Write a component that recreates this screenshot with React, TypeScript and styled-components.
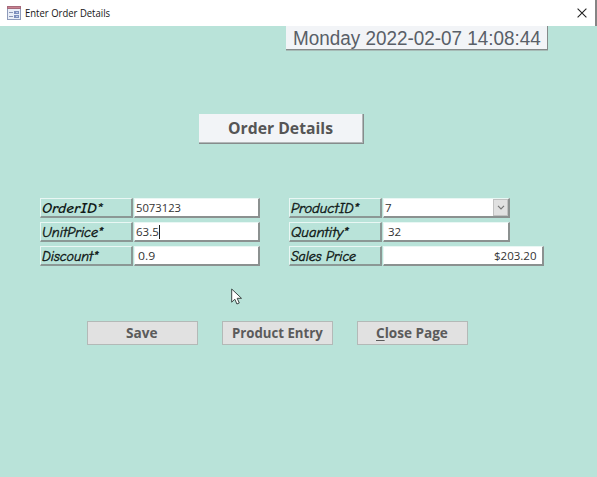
import React, { useLayoutEffect, useRef } from "react";
import styled, { createGlobalStyle } from "styled-components";

const Global = createGlobalStyle`
  * { box-sizing: border-box; }
  body { margin: 0; background: #b9e3d9; overflow: hidden; }
`;

const Window = styled.div`
  width: 597px;
  height: 477px;
  background: #b9e3d9;
  display: flex;
  flex-direction: column;
  font-family: "Open Sans", "Noto Sans", sans-serif;
  color: #444;
`;

const TitleBar = styled.header`
  height: 26px;
  flex: none;
  display: flex;
  align-items: center;
  background: #fff;
  border-right: 2px solid #858585;
  padding: 0 8px 0 7px;
`;

const Title = styled.div`
  flex: 1;
  margin-left: 4px;
  font-size: 11.5px;
  line-height: 16px;
  color: #151515;
`;

const FitText = styled.span<{ $width: number }>`
  display: block;
  width: ${(p) => p.$width}px;
  white-space: nowrap;
  & > span { display: inline-block; transform-origin: 0 50%; }
`;

/* Condenses or widens its text to span the given width. */
function Fit({ width, children }: { width: number; children: React.ReactNode }) {
  const ref = useRef<HTMLSpanElement>(null);
  useLayoutEffect(() => {
    const fit = () => {
      const el = ref.current;
      if (el && el.offsetWidth) el.style.transform = `scaleX(${width / el.offsetWidth})`;
    };
    fit();
    document.fonts.ready.then(fit);
  }, [width]);
  return (
    <FitText $width={width}>
      <span ref={ref}>{children}</span>
    </FitText>
  );
}

const Clock = styled.div`
  flex: none;
  width: 262px;
  height: 24px;
  margin-left: 286px;
  padding-left: 7px;
  background: #f2f4f7;
  border: solid #858a8a;
  border-width: 0 1.5px 1.5px 0;
  box-shadow: 0 1px 0 #a6bcb7;
  font: 19.5px/24px "Liberation Sans", Arial, sans-serif;
  color: #595f68;
`;

const Heading = styled.h1`
  flex: none;
  width: 165px;
  height: 30px;
  margin: 64px 0 0 199px;
  padding-left: 29px;
  background: #f2f4f7;
  border: solid #868c8c;
  border-width: 0 1px 1px 0;
  box-shadow: inset -1px -1px 0 #b3b8b9;
  font-size: 16.5px;
  line-height: 28px;
  font-weight: 700;
  color: #555;
`;

const Form = styled.main`
  flex: none;
  display: flex;
  gap: 29px;
  margin: 54px 0 0 40px;
`;

const Column = styled.div`
  display: flex;
  flex-direction: column;
  gap: 4px;
`;

const Row = styled.div`
  display: flex;
  gap: 1px;
  height: 20px;
`;

const Label = styled.label<{ $bold?: boolean }>`
  width: 93px;
  padding-left: 1px;
  border: solid;
  border-width: 1px 2px 2px 1px;
  border-color: #e9f7f4 #8b9895 #8b9895 #e9f7f4;
  font: italic ${(p) => (p.$bold ? 700 : 400)} 13px/20px "Comic Sans MS", "Comic Neue", "Open Sans", cursive;
  -webkit-text-stroke: ${(p) => (p.$bold ? 0 : 0.4)}px #111a18;
  color: #111a18;
`;

const Field = styled.div<{ $width?: number; $indent?: number; $right?: boolean }>`
  width: ${(p) => p.$width ?? 126}px;
  display: flex;
  justify-content: ${(p) => (p.$right ? "flex-end" : "flex-start")};
  padding: 0 ${(p) => (p.$right ? 6 : 0)}px 0 ${(p) => p.$indent ?? 1}px;
  background: #fff;
  border: solid;
  border-width: 1px 2px 2px 1px;
  border-color: #e9f7f4 #8b9190 #8b9190 #e9f7f4;
  font-size: 11.5px;
  line-height: 17px;
  font-weight: 500;
  color: #333;
`;

const Caret = styled.i`
  width: 1px;
  height: 14px;
  margin-top: 2px;
  background: #222;
`;

const DropButton = styled.span`
  width: 15px;
  height: 17px;
  margin-left: auto;
  display: grid;
  place-items: center;
  background: #e1e1e1;
  border: 1px solid #c2c2c2;
`;

const Actions = styled.footer`
  flex: none;
  display: flex;
  gap: 24px;
  margin: 55px 0 0 86.5px;
`;

const Button = styled.button`
  width: 111px;
  height: 24px;
  padding: 0;
  display: flex;
  justify-content: center;
  background: #e1e1e1;
  border: 1px solid #b3b9b7;
  font: 700 14.5px/22px "Open Sans", "Noto Sans", sans-serif;
  color: #5b5b5b;
`;

const Mnemonic = styled.span`
  text-decoration: underline;
  text-decoration-thickness: 1px;
  text-underline-offset: 2px;
`;

const Pointer = styled.svg`
  position: absolute;
  left: 231px;
  top: 288px;
`;

const FormIcon = () => (
  <svg width="14" height="14" viewBox="0 0 14 14">
    <rect x=".5" y=".5" width="13" height="13" fill="#e9eef8" stroke="#8e9bbb" />
    <path d="M0 0h14v3H0z" fill="#a66a7b" />
    <path d="M1 1h12v1H1z" fill="#ca8290" />
    <path d="M2 6.5h4M2 10.5h4" stroke="#8b96b5" />
    <path d="M7 5h5v3H7zM7 9h5v3H7z" fill="#7d8fbd" />
    <path d="M9 6h2v1H9zM9 10h2v1H9z" fill="#bdcbe7" />
  </svg>
);

export default function App() {
  return (
    <Window>
      <Global />
      <TitleBar>
        <FormIcon />
        <Title><Fit width={85}>Enter Order Details</Fit></Title>
        <svg width="10" height="10" viewBox="0 0 10 10">
          <path d="M.6.6l8.8 8.8M9.4.6L.6 9.4" stroke="#222" strokeWidth="1.1" />
        </svg>
      </TitleBar>
      <Clock><Fit width={248}>Monday 2022-02-07 14:08:44</Fit></Clock>
      <Heading><Fit width={105}>Order Details</Fit></Heading>
      <Form>
        <Column>
          <Row>
            <Label $bold><Fit width={61}>OrderID*</Fit></Label>
            <Field><Fit width={45}>5073123</Fit></Field>
          </Row>
          <Row>
            <Label><Fit width={61}>UnitPrice*</Fit></Label>
            <Field><Fit width={23}>63.5</Fit><Caret /></Field>
          </Row>
          <Row>
            <Label><Fit width={57}>Discount*</Fit></Label>
            <Field $indent={3}><Fit width={17}>0.9</Fit></Field>
          </Row>
        </Column>
        <Column>
          <Row>
            <Label><Fit width={68}>ProductID*</Fit></Label>
            <Field $width={127}>
              <Fit width={7}>7</Fit>
              <DropButton>
                <svg width="8" height="5" viewBox="0 0 8 5">
                  <path d="M1 .8l3 3 3-3" fill="none" stroke="#777" strokeWidth="1.2" />
                </svg>
              </DropButton>
            </Field>
          </Row>
          <Row>
            <Label><Fit width={58}>Quantity*</Fit></Label>
            <Field $width={127} $indent={4}><Fit width={13}>32</Fit></Field>
          </Row>
          <Row>
            <Label><Fit width={65}>Sales Price</Fit></Label>
            <Field $width={161} $right><Fit width={42}>$203.20</Fit></Field>
          </Row>
        </Column>
      </Form>
      <Actions>
        <Button><Fit width={32}>Save</Fit></Button>
        <Button><Fit width={91}>Product Entry</Fit></Button>
        <Button><Fit width={72}><Mnemonic>C</Mnemonic>lose Page</Fit></Button>
      </Actions>
      <Pointer width="12" height="18" viewBox="0 0 12 18">
        <path d="M.7 1v13.2l3.1-3 2.1 4.8 2.4-1-2.1-4.7h4.3z" fill="#fff" stroke="#3b4644" strokeWidth="1" />
      </Pointer>
    </Window>
  );
}
